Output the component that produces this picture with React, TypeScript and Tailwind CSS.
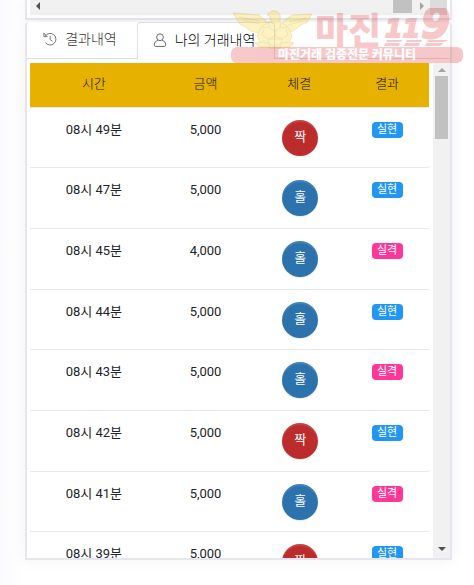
import React from "react";

type Side = "짝" | "홀";
type Trade = { time: string; amount: string; side: Side; won: boolean };

const trades: Trade[] = [
  { time: "08시 49분", amount: "5,000", side: "짝", won: true },
  { time: "08시 47분", amount: "5,000", side: "홀", won: true },
  { time: "08시 45분", amount: "4,000", side: "홀", won: false },
  { time: "08시 44분", amount: "5,000", side: "홀", won: true },
  { time: "08시 43분", amount: "5,000", side: "홀", won: false },
  { time: "08시 42분", amount: "5,000", side: "짝", won: true },
  { time: "08시 41분", amount: "5,000", side: "홀", won: false },
  { time: "08시 39분", amount: "5,000", side: "짝", won: true },
];

function HistoryIcon() {
  return (
    <svg className="size-3.5" viewBox="0 0 14 14" fill="none" stroke="#777" strokeWidth="1" aria-hidden="true">
      <path d="M2.2 4.2A5.8 5.8 0 1 1 2.4 10.6" />
      <path d="M.9 1v3.6h3.7M.9 1.2l2.7 2.6M7.2 3.8v3.8l2.3 1.6" />
    </svg>
  );
}

function UserIcon() {
  return (
    <svg className="size-3.5" viewBox="0 0 14 14" fill="none" stroke="#666" strokeWidth="1" aria-hidden="true">
      <circle cx="7" cy="4.2" r="3.4" />
      <path d="M4.7 7.4C2.6 8 1.4 9.5 1.4 11.3v1c0 .7.4 1.1 1.1 1.1h9c.7 0 1.1-.4 1.1-1.1v-1c0-1.8-1.2-3.3-3.3-3.9" />
    </svg>
  );
}

function Arrow({ points, dark }: { points: string; dark?: boolean }) {
  return (
    <svg className="size-2" viewBox="0 0 8 8" fill={dark ? "#505050" : "#a3a3a3"} aria-hidden="true">
      <polygon points={points} />
    </svg>
  );
}

function HorizontalScrollbar() {
  return (
    <div className="flex h-[15px] bg-[#f1f1f1]">
      <div className="flex flex-1 items-center justify-between pr-1 pl-1">
        <div className="pb-1">
          <Arrow points="6,0 2,4 6,8" dark />
        </div>
        <div className="flex h-full items-center gap-1.5">
          <div className="h-[13px] w-[19px] self-start bg-[#c1c1c1]" />
          <div className="pb-1">
            <Arrow points="2,0 6,4 2,8" />
          </div>
        </div>
      </div>
      <div className="w-[17px] bg-[#dcdcdc]" />
    </div>
  );
}

function VerticalScrollbar() {
  return (
    <div className="flex w-[17px] flex-col items-center bg-[#f1f1f1]">
      <div className="flex h-[13px] items-center">
        <Arrow points="0,6 4,2 8,6" />
      </div>
      <div className="h-[63px] w-[13px] bg-[#c1c1c1]" />
      <div className="mt-auto flex h-[19px] items-center">
        <Arrow points="0,2 4,6 8,2" dark />
      </div>
    </div>
  );
}

function Watermark() {
  return (
    <div className="pointer-events-none absolute top-2 left-[231px] h-[55px] w-[233px]">
      <svg className="size-full" viewBox="0 0 233 55" aria-label="마진119">
        <g opacity="0.28">
          <g fill="#f7d51c" stroke="#c8a010" strokeWidth="1">
            <path d="M2 5l26 2 7 6 4 5h10l4-5 8-6 20-1-5 8-8 4-6 5-12 2-8-1-14 1-8-2-5-4-6-3z" />
            <path d="M41 3q6-1 8 4v6l-4 4-5-4-1-5-3-1z" />
            <path d="M30 19l7-5h13l7 5 4 9-4 8-9 4H39l-9-4-4-8z" />
            <path d="M24 35l9-1 11 4 11-4 8 1-4 4H28z" />
          </g>
          <g fill="none" stroke="#c8a010" strokeWidth="1">
            <path d="M37 14l2 6 5 3 5-3 1-6M30 19l9 1M57 19l-8 1M44 23v5M44 28l-7 3-6-4 2-6M44 28l7 3 6-4-2-6M37 31l2 8M51 31l-2 8M37 31h14M8 9l20 4M12 12l17 4M76 10l-18 4M72 13l-15 4" />
          </g>
        </g>
        <g opacity="0.23" fill="#dd1620">
          <text x="84" y="36" fontSize="36" fontWeight="900" fontFamily="'Noto Sans CJK KR', sans-serif">마진</text>
          <g fontWeight="700" fontStyle="italic" stroke="#dd1620" strokeWidth="2" fontFamily="'DejaVu Sans', sans-serif">
            <text x="154" y="29" fontSize="25">11</text>
            <text x="190" y="30" fontSize="42">9</text>
          </g>
          <path d="M156 32h15l-1 2h-15zM154 35h15l-1 3h-15zM176 32h15l-1 2h-15zM174 35h15l-1 3h-15zM197 32h20l-3 2h-18zM195 35h18l-4 3h-15z" />
          <rect x="0" y="39" width="232" height="16" rx="6" />
        </g>
        <text x="47" y="51" fontSize="12" fontWeight="900" fill="#fff" fontFamily="'Noto Sans CJK KR', sans-serif">마진거래 검증전문 커뮤니티</text>
      </svg>
    </div>
  );
}

export default function App() {
  return (
    <main className="relative bg-[linear-gradient(to_right,#fafafc,#fff_24px)] pr-[22px] pb-[26px] pl-[25px] font-[Roboto,'Noto_Sans_CJK_KR',sans-serif] text-[13px] leading-5 text-[#212529]">
      <section className="border-2 border-t-0 border-[#e6e6ec] bg-white px-[3px] pb-[3px] shadow-[0_0_16px_rgba(0,0,0,0.06)]">
        <HorizontalScrollbar />
      </section>

      <section className="mt-0.5 rounded-t border-x-2 border-b-2 border-[#e6e6ec] bg-white shadow-[0_0_16px_rgba(0,0,0,0.06)]">
        <div role="tablist" className="flex h-[37px] text-sm font-light">
          <button
            type="button"
            role="tab"
            aria-selected={false}
            className="flex w-[110px] items-center justify-center gap-2 border-b border-[#dee0e4] pr-1 pb-0.5 text-[#333]"
          >
            <HistoryIcon />
            결과내역
          </button>
          <button
            type="button"
            role="tab"
            aria-selected
            className="flex w-[138px] items-center justify-center gap-2 rounded-t border-x border-t border-[#dee0e4] pr-1 pb-0.5 text-black"
          >
            <UserIcon />
            나의 거래내역
          </button>
          <div className="flex-1 border-b border-[#dee0e4]" />
        </div>

        <div className="mt-1 flex h-[495px] overflow-hidden pl-[3px]">
          <div className="mr-1 flex-1">
            <table className="h-[529px] w-full table-fixed border-collapse text-center">
              <colgroup>
                <col className="w-[32%]" />
                <col className="w-[24%]" />
                <col className="w-[23%]" />
                <col className="w-[21%]" />
              </colgroup>
              <thead>
                <tr className="h-11 bg-[#e6b100] text-[#140f00]">
                  <th className="pb-0.5 font-light">시간</th>
                  <th className="pb-0.5 font-light">금액</th>
                  <th className="pb-0.5 font-light">체결</th>
                  <th className="pb-0.5 font-light">결과</th>
                </tr>
              </thead>
              <tbody>
                {trades.map((trade) => (
                  <tr key={trade.time} className="border-t border-[#e6e8ea] align-top">
                    <td className="pt-3">{trade.time}</td>
                    <td className="pt-3">{trade.amount}</td>
                    <td className="pt-3 pl-0.5">
                      <span
                        className={`mx-auto flex size-9 items-center justify-center rounded-full pb-0.5 text-white shadow-[inset_0_2px_1px_rgba(255,255,255,0.13),0_1px_1px_rgba(0,0,0,0.1)] ${
                          trade.side === "짝" ? "bg-[#bd2c2c]" : "bg-[#2c72ad]"
                        }`}
                      >
                        {trade.side}
                      </span>
                    </td>
                    <td className="pt-3.5">
                      <span
                        className={`mx-auto flex h-4 w-[31px] items-center justify-center rounded text-[11px] text-white ${
                          trade.won ? "bg-[#2196f3]" : "bg-[#ff3898]"
                        }`}
                      >
                        {trade.won ? "실현" : "실격"}
                      </span>
                    </td>
                  </tr>
                ))}
              </tbody>
            </table>
          </div>
          <VerticalScrollbar />
        </div>
      </section>
      <Watermark />
    </main>
  );
}
